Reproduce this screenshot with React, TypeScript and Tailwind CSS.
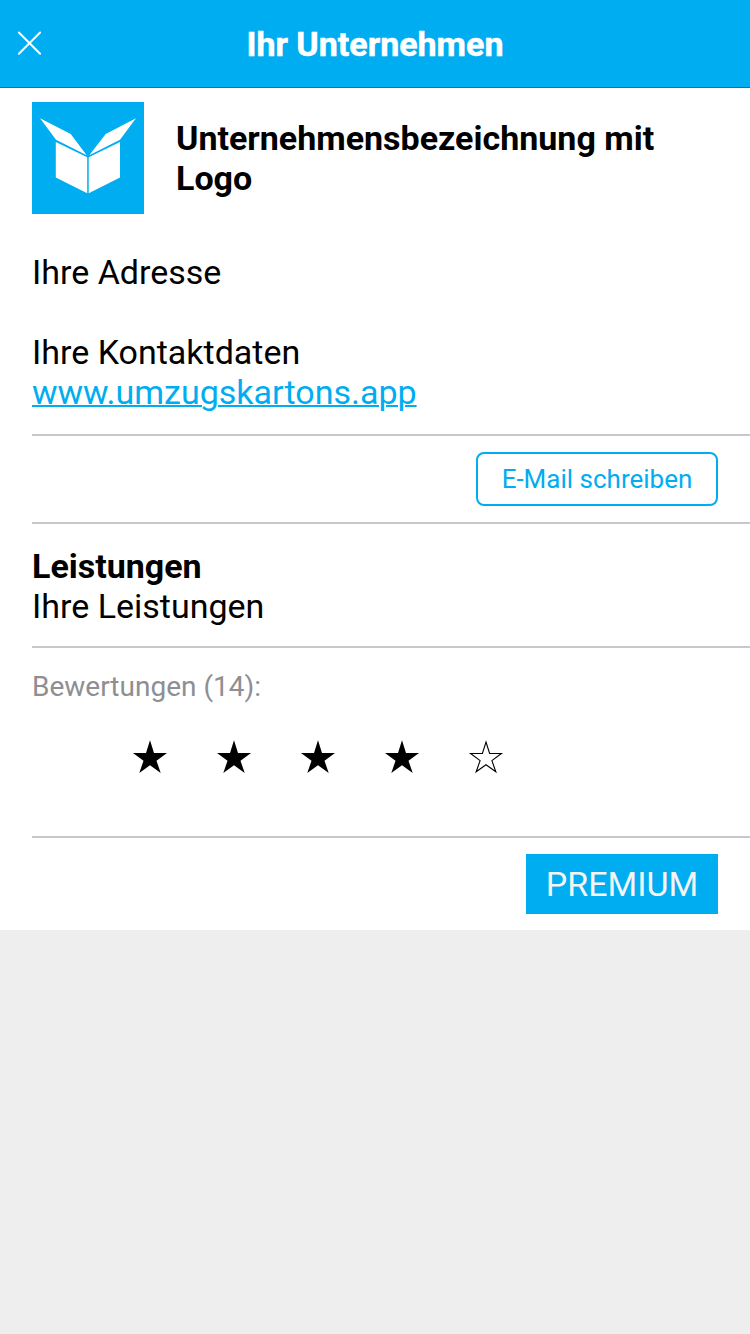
export default function App() {
  return (
    <div className="flex h-[1334px] w-[750px] flex-col bg-[#eeeeee] font-[Roboto,sans-serif] text-[34px] leading-[40px] text-black">
      <header className="grid h-[88px] shrink-0 grid-cols-[60px_1fr_60px] items-center border-b border-[#0079a8] bg-[#00adf0] text-white">
        <svg className="ml-[17px] h-[25px] w-[25px]" viewBox="0 0 25 25" fill="none" stroke="currentColor" strokeWidth="2" strokeLinecap="round">
          <path d="M1.9 1.500 23.100 22.700M23.100 1.500 1.900 22.700" />
        </svg>
        <h1 className="text-center font-bold [-webkit-text-stroke:0.5px_white]">Ihr Unternehmen</h1>
      </header>
      <main className="bg-white pl-8">
        <section className="flex pt-[14px]">
          <svg className="h-28 w-28 shrink-0 bg-[#00adf0]" viewBox="0 0 112 112" fill="white">
            <path d="M8 16.200 38.700 32 54.700 53.200 24 37.700ZM104 16.200 73.700 32 57.300 53.200 88 37.700ZM23.800 40 55.200 55.200V91.200L23.800 75.500ZM88 40 56.700 55.200V91.200L88 75.500Z" />
          </svg>
          <h2 className="ml-8 mt-4 w-[520px] font-bold">Unternehmensbezeichnung mit Logo</h2>
        </section>
        <section className="h-[222px] border-b-2 border-[#c8c7cc] pt-[38px]">
          <p>Ihre Adresse</p>
          <p className="mt-10">Ihre Kontaktdaten</p>
          <a className="block text-[#00adf0] underline decoration-2">www.umzugskartons.app</a>
        </section>
        <section className="flex h-[88px] items-center justify-end border-b-2 border-[#c8c7cc] pr-8">
          <button className="h-[54px] w-[242px] rounded-lg border-2 border-[#00adf0] text-[26px] text-[#00adf0]">E-Mail schreiben</button>
        </section>
        <section className="h-[124px] border-b-2 border-[#c8c7cc] pt-[22px]">
          <h3 className="font-bold">Leistungen</h3>
          <p>Ihre Leistungen</p>
        </section>
        <section className="h-[190px] border-b-2 border-[#c8c7cc] pt-[19px]">
          <p className="text-[28px] text-[#8e8e93]">Bewertungen (14):</p>
          <div className="ml-[100px] mt-[33px] flex gap-[48.1px]">
            {[1, 2, 3, 4, 5].map((n) => (
              <svg key={n} className="h-9 w-9" viewBox="0 0 36 36">
                {n < 5 ? (
                  <path d="M18 .3 22 13H35L24.500 20.800 28.700 33 18 25.300 7.300 33 11.500 20.800 1 13H14Z" />
                ) : (
                  <path fill="none" stroke="black" strokeWidth="1.100" d="M18 2 21.600 13.500H33.400L23.900 20.600 27.800 31.800 18 24.700 8.200 31.800 12.100 20.600 2.600 13.500H14.400Z" />
                )}
              </svg>
            ))}
          </div>
        </section>
        <section className="flex h-[92px] items-center justify-end pr-8">
          <span className="flex h-[60px] w-48 items-center justify-center bg-[#00adf0] text-[#f4f4f4]">PREMIUM</span>
        </section>
      </main>
    </div>
  );
}
